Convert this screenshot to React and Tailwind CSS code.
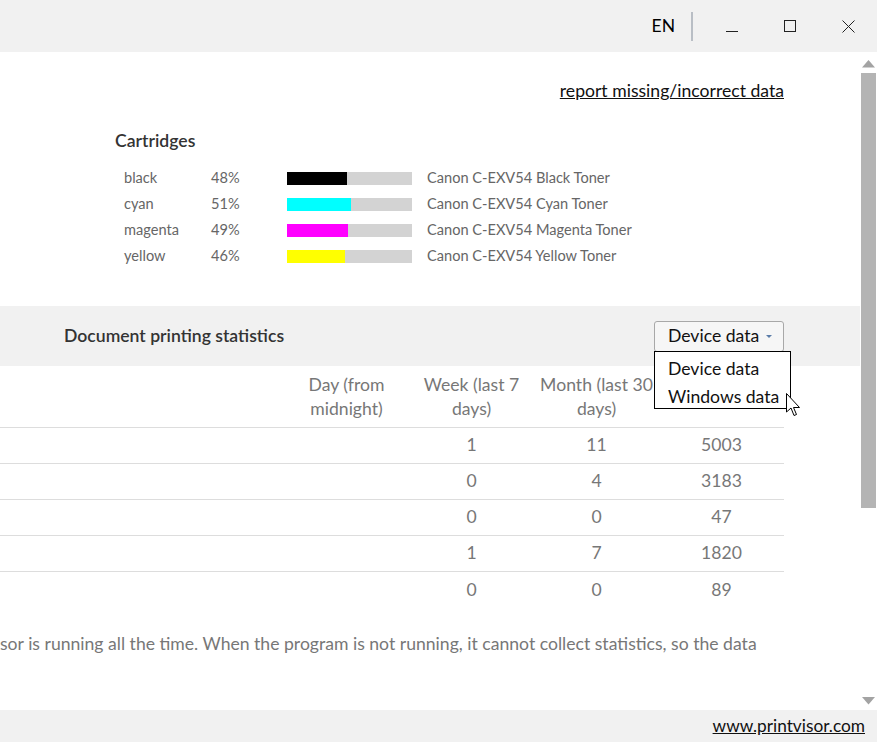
import React from "react";

const font = { fontFamily: '"Segoe UI", Lato, "Liberation Sans", sans-serif' };

const carts = [
  { name: "black", pct: 48, color: "bg-[#000000]", label: "Canon C-EXV54 Black Toner" },
  { name: "cyan", pct: 51, color: "bg-[#00ffff]", label: "Canon C-EXV54 Cyan Toner" },
  { name: "magenta", pct: 49, color: "bg-[#ff00ff]", label: "Canon C-EXV54 Magenta Toner" },
  { name: "yellow", pct: 46, color: "bg-[#ffff00]", label: "Canon C-EXV54 Yellow Toner" },
];

const rows = [
  ["", "1", "11", "5003"],
  ["", "0", "4", "3183"],
  ["", "0", "0", "47"],
  ["", "1", "7", "1820"],
  ["", "0", "0", "89"],
];

function TitleBar() {
  return (
    <div className="h-[52px] bg-[#f1f1f1] flex items-center justify-end shrink-0">
      <span className="text-[17.5px] text-black mr-[16px]">EN</span>
      <div className="w-[2px] h-[29px] bg-[#b9bec5] mr-[10px]" />
      <div className="w-[58px] h-[52px] flex items-center justify-center">
        <svg width="12" height="12" viewBox="0 0 12 12"><path d="M0 11.5H12" stroke="#222" strokeWidth="1" /></svg>
      </div>
      <div className="w-[58px] h-[52px] flex items-center justify-center">
        <svg width="12" height="12" viewBox="0 0 12 12"><rect x="0.5" y="0.5" width="11" height="11" fill="none" stroke="#222" strokeWidth="1" /></svg>
      </div>
      <div className="w-[58px] h-[52px] flex items-center justify-center">
        <svg width="13" height="13" viewBox="0 0 13 13"><path d="M0.5 0.5L12.5 12.5M12.5 0.5L0.5 12.5" stroke="#222" strokeWidth="1" /></svg>
      </div>
    </div>
  );
}

function Scrollbar() {
  return (
    <div className="w-[17px] flex flex-col items-center shrink-0 bg-white">
      <svg width="15" height="21" viewBox="0 0 15 21" className="shrink-0">
        <path d="M1 15.5L7.5 8L14 15.5Z" fill="#a3a3a3" />
      </svg>
      <div className="w-[15px] h-[435px] bg-[#b4b4b4]" />
      <div className="flex-1" />
      <svg width="15" height="13" viewBox="0 0 15 13" className="shrink-0">
        <path d="M1 0L14 0L7.5 7.5Z" fill="#a3a3a3" />
      </svg>
    </div>
  );
}

function Cursor() {
  return (
    <svg width="14" height="26" viewBox="0 0 14 26" className="absolute left-[786px] top-[341px]">
      <path d="M0.5 0.5V19L5 15L8 22.5L10.5 21.5L7.5 14.5H13.5Z" fill="#fff" stroke="#000" strokeWidth="1" strokeLinejoin="round" />
    </svg>
  );
}

export default function App() {
  return (
    <div className="w-[877px] h-[742px] flex flex-col bg-white overflow-hidden" style={font}>
      <TitleBar />
      <div className="flex-1 flex min-h-0">
        <div className="w-[860px] relative overflow-hidden flex flex-col">
          <div className="h-[24px]" />
          <div className="w-[784px] flex justify-end">
            <a className="text-[17.6px] text-[#111] underline leading-[30px]">report missing/incorrect data</a>
          </div>
          <div className="h-[22px]" />
          <div className="pl-[115px] text-[17.6px] font-semibold text-[#333] leading-[26px]">Cartridges</div>
          <div className="h-[11px]" />
          <div className="pl-[124px] flex flex-col">
            {carts.map((c) => (
              <div key={c.name} className="h-[26px] flex items-center text-[14.6px] text-[#666]">
                <span className="w-[87px]">{c.name}</span>
                <span className="w-[76px]">{c.pct}%</span>
                <div className="w-[125px] h-[13px] bg-[#d3d3d3] flex">
                  <div className={`h-full ${c.color}`} style={{ width: `${c.pct}%` }} />
                </div>
                <span className="ml-[15px]">{c.label}</span>
              </div>
            ))}
          </div>
          <div className="h-[37px]" />
          <div className="h-[60px] bg-[#f1f1f1] flex items-center">
            <div className="w-[784px] flex items-center justify-between pl-[64px]">
              <span className="text-[17.6px] font-semibold text-[#333]">Document printing statistics</span>
              <div className="w-[130px] h-[31px] border border-[#a8a8a8] rounded-[3px] bg-[#f6f6f6] flex items-center pl-[13px] text-[17.6px] text-[#111]">
                Device data
                <svg width="8" height="5" viewBox="0 0 8 5" className="ml-[6px]"><path d="M1 1L7 1L4 4Z" fill="#5a7ca8" /></svg>
              </div>
            </div>
          </div>
          <div className="w-[784px] flex flex-col">
            <div className="h-[62px] flex items-center border-b border-[#dddddd] text-[17.6px] text-[#777] leading-[24px]">
              <div className="flex-1" />
              <div className="w-[125px] text-center">Day (from<br />midnight)</div>
              <div className="w-[125px] text-center">Week (last 7<br />days)</div>
              <div className="w-[125px] text-center">Month (last 30<br />days)</div>
              <div className="w-[125px]" />
            </div>
            {rows.map((r, i) => (
              <div key={i} className={`h-[36px] flex items-center text-[17.6px] text-[#777] ${i < rows.length - 1 ? "border-b border-[#dddddd]" : ""}`}>
                <div className="flex-1" />
                <div className="w-[125px] text-center">{r[0]}</div>
                <div className="w-[125px] text-center">{r[1]}</div>
                <div className="w-[125px] text-center">{r[2]}</div>
                <div className="w-[125px] text-center">{r[3]}</div>
              </div>
            ))}
          </div>
          <div className="h-[23px]" />
          <div className="text-[17.6px] text-[#777] whitespace-nowrap leading-[26px]">
            sor is running all the time. When the program is not running, it cannot collect statistics, so the data
          </div>
          <div className="absolute left-[654px] top-[299px] w-[137px] h-[58px] border border-black bg-white flex flex-col pt-[3px] pl-[13px] text-[17.6px] text-[#111] leading-[28px]">
            <span>Device data</span>
            <span>Windows data</span>
          </div>
          <Cursor />
        </div>
        <Scrollbar />
      </div>
      <div className="h-[32px] bg-[#f1f1f1] flex items-center justify-end pr-[12px] shrink-0">
        <a className="text-[17.3px] text-[#111] underline">www.printvisor.com</a>
      </div>
    </div>
  );
}
